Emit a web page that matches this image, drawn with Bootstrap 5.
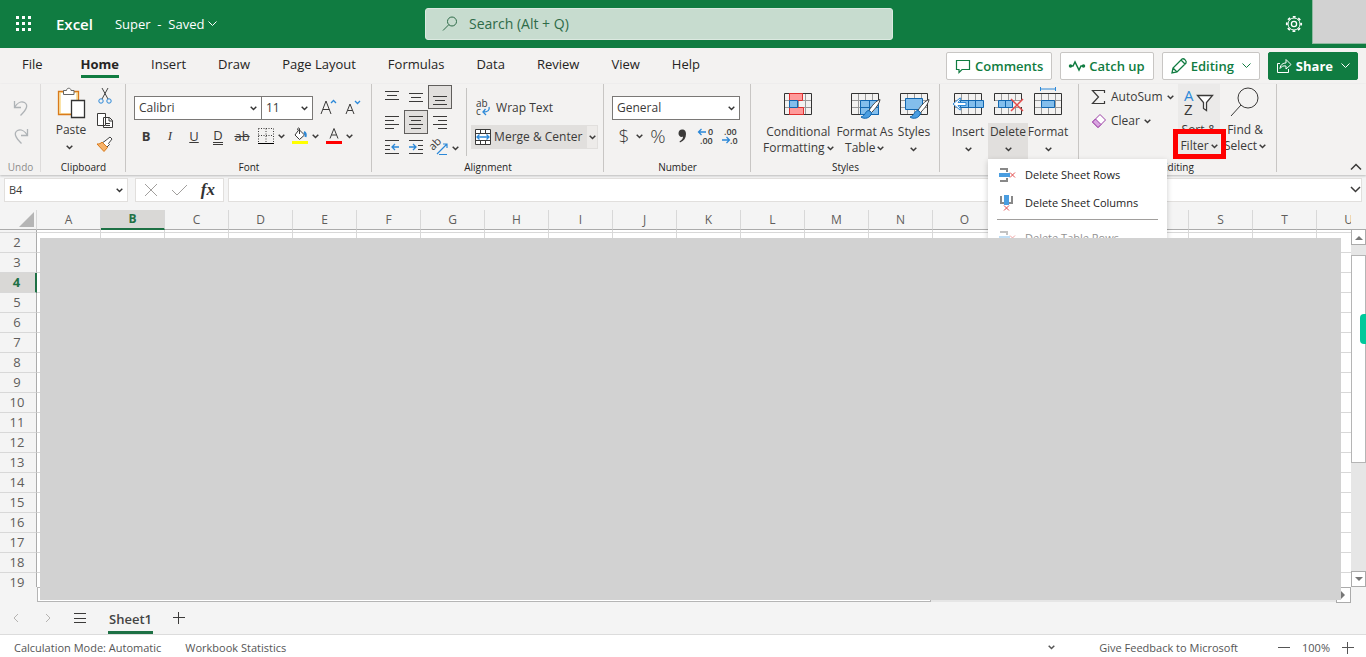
<!DOCTYPE html>
<html lang="en">
<head>
<meta charset="utf-8">
<meta name="viewport" content="width=device-width, initial-scale=1">
<title>Super - Excel</title>
<link href="https://cdn.jsdelivr.net/npm/bootstrap@5.3.0/dist/css/bootstrap.min.css" rel="stylesheet">
<style>
:root{--xl:#107c41;--ink:#3b3a39;--line:#c8c6c4;--blue:#2b88d8}
body{font-family:"Open Sans","Noto Sans",sans-serif;font-size:12px;line-height:16px;color:var(--ink);background:#f4f4f4;height:100vh;min-width:1280px;overflow:hidden}
body>*{flex-shrink:0}
button{font:inherit;color:inherit;background:none;border:0;padding:0}
svg{flex:none;fill:none;stroke:currentColor;display:block;overflow:visible}
svg text{stroke:none;fill:currentColor;font-family:"Open Sans",sans-serif}
.chev{width:7px;height:5px;stroke-width:1.5}
.chev-lg{width:9px;height:6px;stroke-width:1}
/* title bar */
.topbar{height:48px;background:var(--xl);color:#fff;position:relative;padding-left:16px}
.brand-name{font-size:15px;font-weight:600;margin-left:24px}
.doc-name{font-size:13px;margin-left:22px}
.finder{position:absolute;left:425px;top:8px;width:468px;height:32px;background:#c7dccf;border:1px solid #dbe9e0;border-radius:3px;color:#2e6b48;padding-left:16px}
.finder input{background:none;border:0;outline:0;font-size:14px;color:#2e6b48;padding:0 0 0 11px}
.finder input::placeholder{color:#2e6b48;opacity:1}
.account-box{width:54px;height:44px;background:#d2d2d2;border:1px solid #8fb9a0;border-top:0;border-right:0}
/* tabs */
.tabs-row{height:36px;background:#f3f2f1;padding-right:8px}
.tab-link{font-size:13px;line-height:18px;color:#252423;text-decoration:none;padding:7px 16px 0}
.tab-link span{display:block;padding-bottom:2px;border-bottom:3px solid transparent}
.tab-link.on{font-weight:700}
.tab-link.on span{border-color:var(--xl)}
.tab-link:first-child{margin-right:6px}
.tabs-list{padding-left:6px}
.pill{height:28px;border:1px solid var(--line);border-radius:2px;background:#fff;color:var(--xl);font-size:13px;font-weight:600;padding:0 8px}
.pill.solid{background:var(--xl);border-color:var(--xl);color:#fff;font-weight:700;padding:0 7px}
/* ribbon */
.ribbon{height:91px;background:#f3f2f1;display:grid;grid-template-columns:41px 85px 246px 232px 147px 189px 139px 198px 1fr;box-shadow:0 1px 2px #bbb;position:relative;z-index:5}
.grp{position:relative;display:flex;flex-direction:column}
.grp:not(:last-child)::after{content:"";position:absolute;right:0;top:0;height:88px;border-right:1px solid var(--line)}
.grp-body{height:76px;display:flex}
.grp-name{font-size:10px;line-height:15px;text-align:center;color:#252423}
.tall{display:flex;flex-direction:column;align-items:center;line-height:16px;white-space:nowrap}
.tall .lbl{margin-top:4px}
.tall .lbl.near{margin-top:2px}
.tall .chev{margin-top:7px}
.tall .lbl .chev{display:inline-block;margin:0 0 1px 2px}
.tall>svg:first-child{height:36px;width:36px}
.cell-btn{width:40px}
.cell-btn.open{background:linear-gradient(transparent 39px,#e1dfdd 39px)}
.sort-btn{width:42px;background:#ebeae9}
.field{height:24px;border:1px solid #7a7876;background:#fff url("data:image/svg+xml,%3Csvg xmlns='http://www.w3.org/2000/svg' width='7' height='5'%3E%3Cpath d='M.7.7l2.8 2.8L6.300.7' fill='none' stroke='%23333' stroke-width='1.4'/%3E%3C/svg%3E") no-repeat right 4px center;appearance:none;padding:0 4px;font-size:12px;color:var(--ink);border-radius:0}
.w-font{width:128px}
.w-size{width:51px}
.sq{width:24px;height:24px;display:flex;align-items:center;justify-content:center;font-size:13px}
.sq.on{background:#e1dfdd;box-shadow:inset 0 0 0 1px #605e5c}
.sq.money{font-size:19px;font-weight:300}
.dbl{border-bottom:3px double;line-height:14px}
.serif-i{font-family:"Liberation Serif",serif;font-style:italic}
.drop{width:6px;height:24px;display:flex;align-items:center;justify-content:center}
.align-grid{display:grid;grid-template-columns:repeat(3,24px);grid-auto-rows:24px;row-gap:1px;padding-top:1px}
.wrap-btn{height:24px;padding-left:4px}
.merge{height:24px;margin-top:5px;background:#e1dfdd}
.merge button+button{background:#edebe9;border:1px solid #e1dfdd;width:12px;display:flex;align-items:center;justify-content:center}
.sum-col{width:91px;padding:1px 0 0 4px}
.sum-col button{height:24px}
/* delete menu */
.del-menu{position:absolute;left:48px;top:75px;width:179px;background:#fff;box-shadow:0 2px 6px #0003;z-index:6;padding-top:2px;font-size:11px}
.del-menu button{display:flex;align-items:center;width:100%;height:28px;padding-left:11px;gap:10px;color:#252423}
.del-menu hr{margin:2px 9px 4px;border-color:#a19f9d;opacity:1}
.marker{position:absolute;left:-5px;top:45px;width:53px;height:30px;border:5px solid red;z-index:7;pointer-events:none}
/* formula bar */
.fbar{padding:3px 4px 3px;gap:7px;height:31px}
.fbox{height:24px;background:#fff;border:1px solid #e1dfdd}
.fx-tools{width:89px;color:#a19f9d}
.fx-label{font:italic bold 17px "Liberation Serif",serif;color:#333}
.fx-line{margin-left:-3px}
.fx-line input{outline:0}
.name-box{width:124px;border-color:#e1dfdd;font-size:11px}
/* sheet */
.sheet-area{position:relative;margin-top:4px;min-height:0;flex:1 1 0}
.grid-wrap{min-height:0;flex:1 1 0}
.pane{overflow:hidden;min-width:0}
.cells{border-collapse:separate;border-spacing:0;table-layout:fixed;width:1381px;background:#fff}
.cells th,.cells td{padding:0;height:20px;line-height:19px;border-right:1px solid #d8d8d8;border-bottom:1px solid #d8d8d8;font-weight:400}
.cells th{background:#f4f4f4;color:#5f5d5b;text-align:center;font-size:12px}
.cells thead th{border-bottom-color:#ababab;height:20px;line-height:18px}
.cells thead th:first-child{width:37px}
.cells thead svg{margin-left:19px}
.cells tbody th{border-right-color:#ababab;font-size:13px;padding-right:2px}
.cells .short th,.cells .short td{height:3px;line-height:0;font-size:0}
.cells .sel{background:#d9d8d6;color:#1e7145;font-weight:700}
.cells thead .sel{border-bottom:2px solid #1e7145}
.cells tbody .sel{border-right:2px solid #1e7145}
.vbar{width:15px;margin-top:19px;background:#e6e6e6}
.arrow{width:15px;height:16px;background:#fff;border:1px solid #ababab;display:flex;align-items:center;justify-content:center}
.arrow svg{fill:#777;stroke:none}
.thumb{background:#fff;border:1px solid #b5b5b5}
.vbar .thumb{height:58%;margin-top:10px}
.hbar{height:15px;flex-shrink:0;margin-left:37px;margin-right:15px;background:#e6e6e6}
.hbar .thumb{width:68%}
.cover{position:absolute;left:40px;right:25px;top:28px;bottom:2px;background:#d2d2d2;z-index:10}
.side-tab{position:absolute;right:0;top:104px;width:6px;height:30px;background:#00c99b;border-radius:4px 0 0 4px;z-index:11}
.sheets{height:33px;border-bottom:1px solid #dcdcdc;padding-left:12px}
.sheet-tab{font-size:13px;font-weight:600;height:28px;padding:0 1px;margin:0 20px;border-bottom:3px solid #1e7145;color:#444}
.pale{color:#b5b3b1}
.status{height:22px;background:#fff;color:#555;font-size:11px;padding:3px 12px 0 14px}
.status a{margin:0 40px 0 44px}
</style>
</head>
<body class="d-flex flex-column">
<svg width="0" height="0" class="position-absolute">
<symbol id="cv" viewBox="0 0 7 5"><path d="M.7.7l2.800 2.800L6.300.7"/></symbol>
<symbol id="cvl" viewBox="0 0 9 6"><path d="M.5.5l4 4 4-4"/></symbol>
<symbol id="tbl" viewBox="0 0 30 24"><path fill="#fff" stroke="#999" d="M1.500 8.500h27M1.500 15.500h27M8.500 1.500v21M15.500 1.500v21M22.500 1.500v21"/><path stroke="#333" d="M1.500 1.500h27v21h-27z"/></symbol>
<symbol id="brush" viewBox="0 0 22 22"><path fill="#fff" stroke="#444" d="M20.500 1.500c-4 1.500-8 6-11 11l2.500 2c4-4 8-9 8.500-13z"/><path fill="#4a9de0" stroke="#1267b0" d="M9.500 12.500c-4 0-3 5-8 6.500 3 2.500 10 1.500 10.500-4.500z"/></symbol>
</svg>

<header class="topbar d-flex align-items-center">
  <button aria-label="App launcher"><svg width="16" height="16" style="fill:#fff;stroke:none"><path d="M0 0h3v3H0zM6 0h3v3H6zM12 0h3v3h-3zM0 6h3v3H0zM6 6h3v3H6zM12 6h3v3h-3zM0 12h3v3H0zM6 12h3v3H6zM12 12h3v3h-3z"/></svg></button>
  <span class="brand-name">Excel</span>
  <button class="doc-name d-flex align-items-center"><span>Super&nbsp; -&nbsp; Saved</span><svg class="chev-lg ms-1"><use href="#cvl"/></svg></button>
  <div class="finder d-flex align-items-center">
    <svg width="16" height="16"><circle cx="10" cy="5.500" r="4.500"/><path d="M6.800 8.700L1 14.500"/></svg>
    <input class="flex-grow-1" type="search" placeholder="Search (Alt + Q)" aria-label="Search">
  </div>
  <button class="ms-auto me-2" aria-label="Settings"><svg width="20" height="20" viewBox="0 0 20 20"><circle cx="10" cy="10" r="2.600" stroke-width="1.300"/><circle cx="10" cy="10" r="6"/><circle cx="10" cy="10" r="7.200" stroke-width="1.800" stroke-dasharray="2.800 2.855" stroke-dashoffset="1.400"/></svg></button>
  <div class="account-box align-self-start"></div>
</header>

<div class="tabs-row d-flex justify-content-between">
  <nav class="tabs-list d-flex align-items-start" aria-label="Ribbon tabs">
    <a href="#" class="tab-link"><span>File</span></a><a href="#" class="tab-link on"><span>Home</span></a><a href="#" class="tab-link"><span>Insert</span></a><a href="#" class="tab-link"><span>Draw</span></a><a href="#" class="tab-link"><span>Page Layout</span></a><a href="#" class="tab-link"><span>Formulas</span></a><a href="#" class="tab-link"><span>Data</span></a><a href="#" class="tab-link"><span>Review</span></a><a href="#" class="tab-link"><span>View</span></a><a href="#" class="tab-link"><span>Help</span></a>
  </nav>
  <div class="d-flex gap-2 pt-1">
    <button class="pill d-flex align-items-center gap-1"><svg width="16" height="16" stroke-width="1.200"><path d="M1.500 2.500h13v9H7l-3 3v-3H1.500z"/></svg>Comments</button>
    <button class="pill d-flex align-items-center gap-1"><svg width="16" height="16" stroke-width="1.500"><path d="M1 8h3l2-4 4 8 2-4h3"/><circle cx="1.500" cy="8" r="1"/><circle cx="14.500" cy="8" r="1"/></svg>Catch up</button>
    <button class="pill d-flex align-items-center gap-1"><svg width="16" height="16" stroke-width="1.300"><path d="M1 15l1-5 9-9c2-1 5 2 4 4l-9 9zM10 2l4 4M2 10l4 4"/></svg>Editing<svg class="chev-lg ms-1"><use href="#cvl"/></svg></button>
    <button class="pill solid d-flex align-items-center gap-1"><svg width="16" height="16"><path d="M4 5.500H1.500v9h11V11M4 10.500c.5-4 3-5.500 6-5.500V1.500l5 5-5 4.500V8c-3-.5-4.500.500-6 2.500z"/></svg>Share<svg class="chev-lg ms-1"><use href="#cvl"/></svg></button>
  </div>
</div>

<section class="ribbon">
  <div class="grp text-secondary opacity-50">
    <div class="grp-body flex-column align-items-center pt-2">
      <button class="sq mt-1" aria-label="Undo"><svg width="16" height="18" stroke-width="1.300"><path d="M1.500 2v6.500H8M1.500 8.500C4 4 8 2 11.500 3.500c4 2.500 2.500 6.500-4 13"/></svg></button>
      <button class="sq mt-1" aria-label="Redo"><svg width="16" height="18" stroke-width="1.300"><path d="M14.500 2v6.500H8M14.500 8.500C12 4 8 2 4.500 3.500c-4 2.500-2.500 6.500 4 13"/></svg></button>
    </div><div class="grp-name">Undo</div>
  </div>
  <div class="grp">
    <div class="grp-body ps-2">
      <button class="tall ps-1"><svg viewBox="0 0 36 36"><path fill="#fbe3a8" stroke="#d97a1a" stroke-width="1.300" d="M5.500 7.500h20v23h-20z"/><path fill="#fff" stroke="none" d="M8 9h15v20H8z"/><path fill="#fff" stroke="#666" d="M10.500 10.500v-4h3c0-3 4.500-3 4.500 0h3v4z"/><path fill="#fff" stroke="#333" stroke-width="1.300" d="M18.500 16.500h13v17h-13z"/></svg><span class="lbl near">Paste</span><svg class="chev me-1"><use href="#cv"/></svg></button>
      <div class="ms-1 d-flex flex-column">
        <button class="sq" aria-label="Cut"><svg width="14" height="18"><path stroke="#444" d="M4 1l6 11M10 1L4 12"/><circle cx="3" cy="14" r="2.200" stroke="#2b88d8"/><circle cx="11" cy="14" r="2.200" stroke="#2b88d8"/></svg></button>
        <button class="sq" aria-label="Copy"><svg width="18" height="18"><path fill="#fff" d="M1.500 2.500h8v12h-8zM7.500 6.500h6l3 3v7h-9zM13 6.500V10h3.500M10 12.500h4M10 14.500h4"/></svg></button>
        <button class="sq" aria-label="Format painter"><svg width="18" height="18"><path fill="#fff" stroke="#444" d="M9 6l5-4 2 2-3.500 4.500 1 1L10 13 6 8z"/><path fill="#f7b36a" stroke="#d97a1a" d="M6 7l5.500 5.500L8 16.500 1 9c2 0 4-.5 5-2z"/></svg></button>
      </div>
    </div><div class="grp-name">Clipboard</div>
  </div>
  <div class="grp">
    <div class="grp-body flex-column ps-2 pt-1">
      <div class="d-flex align-items-center mt-2">
        <select class="field w-font" aria-label="Font"><option>Calibri</option></select>
        <select class="field w-size border-start-0" aria-label="Font size"><option>11</option></select>
        <button class="sq ms-1" aria-label="Grow font"><svg width="18" height="20"><path d="M1 16L6 3l5 13M3 11.500h6.500"/><path stroke="#2b88d8" stroke-width="1.300" d="M11 5l2.500-2.500L16 5"/></svg></button>
        <button class="sq" aria-label="Shrink font"><svg width="18" height="20"><path d="M2 16L6 6l4 10M4 12.500h4.500"/><path stroke="#2b88d8" stroke-width="1.300" d="M11 3l2.500 2.500L16 3"/></svg></button>
      </div>
      <div class="d-flex align-items-center mt-1">
        <button class="sq fw-bold">B</button><button class="sq serif-i">I</button><button class="sq"><u>U</u></button><button class="sq"><span class="dbl">D</span></button><button class="sq text-decoration-line-through">ab</button>
        <button class="sq" aria-label="Borders"><svg width="16" height="16"><path stroke-dasharray="1 1.500" d="M.5.5h15v14M.5.5v14M8 .5v14M.5 7.500h15"/><path stroke="#000" stroke-width="1" d="M0 15.500h16"/></svg></button><span class="drop"><svg class="chev"><use href="#cv"/></svg></span>
        <button class="sq ms-1" aria-label="Fill color"><svg width="16" height="16"><path fill="#fff" d="M7 1.500L12.500 7 7.500 11.500 3 7zM7.500 6V.5c-1-1.500-2 0-2 1.500"/><path stroke="#2b88d8" stroke-width="2" d="M12 4c2 1 2 3 1.500 5"/><path fill="#ff0" stroke="none" d="M0 13h16v3H0z"/></svg></button><span class="drop"><svg class="chev"><use href="#cv"/></svg></span>
        <button class="sq ms-1" aria-label="Font color"><svg width="16" height="16"><path d="M4 10.500L8 .5l4 10M5.500 7h5"/><path fill="red" stroke="none" d="M0 13h16v3H0z"/></svg></button><span class="drop"><svg class="chev"><use href="#cv"/></svg></span>
      </div>
    </div><div class="grp-name">Font</div>
  </div>
  <div class="grp">
    <div class="grp-body ps-2">
      <div class="align-grid">
        <button class="sq" aria-label="Top align"><svg width="16" height="16"><path d="M1 2.500h14M3 6.500h10M1 10.500h14"/></svg></button>
        <button class="sq" aria-label="Middle align"><svg width="16" height="16"><path d="M1 4.500h14M3 8.500h10M1 12.500h14"/></svg></button>
        <button class="sq on" aria-label="Bottom align"><svg width="16" height="16"><path d="M1 7.500h14M3 11.500h10M1 15.500h14"/></svg></button>
        <button class="sq" aria-label="Align left"><svg width="16" height="16"><path d="M1 2.500h14M1 6.500h9M1 10.500h14M1 14.500h9"/></svg></button>
        <button class="sq on" aria-label="Center"><svg width="16" height="16"><path d="M1 2.500h14M3 6.500h10M1 10.500h14M3 14.500h10"/></svg></button>
        <button class="sq" aria-label="Align right"><svg width="16" height="16"><path d="M1 2.500h14M6 6.500h9M1 10.500h14M6 14.500h9"/></svg></button>
        <button class="sq" aria-label="Decrease indent"><svg width="16" height="16"><path d="M1 1.500h14M1 6.500h5M1 10.500h5M1 14.500h14"/><path stroke="#2b88d8" stroke-width="1.300" d="M15 8H8.500M11 5L8 8l3 3"/></svg></button>
        <button class="sq" aria-label="Increase indent"><svg width="16" height="16"><path d="M1 1.500h14M10 6.500h5M10 10.500h5M1 14.500h14"/><path stroke="#2b88d8" stroke-width="1.300" d="M1 8h6.500M5 5l3 3-3 3"/></svg></button>
        <button class="sq" aria-label="Orientation"><svg width="18" height="18"><text font-size="11" transform="translate(4 11) rotate(-45)" x="-3" y="0">ab</text><path stroke="#2b88d8" stroke-width="1.200" d="M6 16L16 6M12 6h4v4M8 16.500h8"/></svg></button>
      </div>
      <div class="d-flex align-items-end"><span class="drop"><svg class="chev"><use href="#cv"/></svg></span></div>
      <div class="vr mt-1 mb-1 ms-2 me-1 opacity-25"></div>
      <div class="d-flex flex-column pt-2 mt-1">
        <button class="wrap-btn d-flex align-items-center"><svg width="18" height="18"><text font-size="10" x="1" y="8">ab</text><text font-size="10" x="1" y="16">c</text><path stroke="#2b88d8" stroke-width="1.300" d="M14 8c1 3-1 5-6 5M10.500 10L8 13l3 3"/></svg>&nbsp;Wrap Text</button>
        <div class="merge d-flex"><button class="d-flex align-items-center ps-1 pe-1"><svg width="16" height="16"><path fill="#fff" d="M.5.5h15v15H.5zM5.500.5v4M10.500.5v4M5.500 11.500v4M10.500 11.500v4M.5 4.500h15M.5 11.500h15"/><path stroke="#2b88d8" stroke-width="1.300" d="M2 8h12M4.500 5.500L2 8l2.500 2.500M11.500 5.500L14 8l-2.500 2.500"/></svg>&nbsp;Merge &amp; Center</button><button aria-label="Merge options"><svg class="chev"><use href="#cv"/></svg></button></div>
      </div>
    </div><div class="grp-name">Alignment</div>
  </div>
  <div class="grp">
    <div class="grp-body flex-column ps-2 pt-1">
      <select class="field w-font mt-2" aria-label="Number format"><option>General</option></select>
      <div class="d-flex mt-1">
        <button class="sq money">$</button><span class="drop"><svg class="chev"><use href="#cv"/></svg></span><button class="sq money ms-1">%</button><button class="sq" aria-label="Comma style"><svg width="12" height="16"><path fill="currentColor" stroke="none" d="M6 1.500c3 0 4 2 4 4.500 0 4-2 7-6 8.500l-.5-1C6 12 7 10.500 7 8.800 4 9.500 2.500 7.500 2.500 5.200c0-2 1.500-3.700 3.500-3.700z"/></svg></button>
        <button class="sq" aria-label="Increase decimal"><svg width="18" height="18"><text font-size="9" font-weight="600" x="11" y="8">0</text><text font-size="9" font-weight="600" x="3" y="17">.00</text><path stroke="#2b88d8" stroke-width="1.300" d="M9 5H2M4.500 2L1.500 5l3 3"/></svg></button>
        <button class="sq" aria-label="Decrease decimal"><svg width="18" height="18"><text font-size="9" font-weight="600" x="3" y="8">.00</text><text font-size="9" font-weight="600" x="9" y="17">.0</text><path stroke="#2b88d8" stroke-width="1.300" d="M1 13h7M5.500 10l3 3-3 3"/></svg></button>
      </div>
    </div><div class="grp-name">Number</div>
  </div>
  <div class="grp">
    <div class="grp-body ps-2 pe-1 justify-content-between">
      <button class="tall ms-1"><svg viewBox="-3 -8 36 36"><use href="#tbl" width="30" height="24"/><path fill="#ff9a9a" stroke="#e03030" d="M6.500 1.500h13v7h-13zM6.500 15.500h14v7h-14z"/><path fill="#83beec" stroke="#1267b0" d="M6.500 8.500h8v7h-8z"/></svg><span class="lbl">Conditional<br>Formatting<svg class="chev"><use href="#cv"/></svg></span></button>
      <button class="tall"><svg viewBox="-3 -8 36 36"><use href="#tbl" width="30" height="24"/><path fill="#83beec" stroke="#1267b0" d="M10.500 8.500h18v14h-18zM10.500 15.500h18M19.500 8.500v14"/><use href="#brush" x="9" y="6" width="23" height="22"/></svg><span class="lbl">Format As<br>Table<svg class="chev"><use href="#cv"/></svg></span></button>
      <button class="tall me-1"><svg viewBox="-3 -8 36 36"><use href="#tbl" width="30" height="24"/><path fill="#83beec" stroke="#1267b0" d="M6.500 6.500h17v11h-17z"/><use href="#brush" x="9" y="6" width="23" height="22"/></svg><span class="lbl">Styles</span><svg class="chev"><use href="#cv"/></svg></button>
    </div><div class="grp-name">Styles</div>
  </div>
  <div class="grp">
    <div class="grp-body ps-2">
      <button class="tall cell-btn"><svg viewBox="-3 -8 36 36"><use href="#tbl" width="30" height="24"/><path fill="#83beec" stroke="#1267b0" d="M7.500 8.500h23v7h-23zM15.500 8.500v7M22.500 8.500v7"/><path fill="#fff" stroke="#2b88d8" d="M13 10.500H5l3-4-1-.5-7 6 7 6 1-.500-3-4h8z"/></svg><span class="lbl">Insert</span><svg class="chev"><use href="#cv"/></svg></button>
      <button class="tall cell-btn open" aria-expanded="true"><svg viewBox="-3 -8 36 36"><use href="#tbl" width="30" height="24"/><path fill="#f3f2f1" stroke="none" d="M0 9h30v6H0z"/><path fill="#83beec" stroke="#1267b0" d="M5.500 8.500h14v7h-14zM12.500 8.500v7"/><path stroke="#e34b4b" stroke-width="1.500" d="M18 7l12 12M30 7L18 19"/></svg><span class="lbl">Delete</span><svg class="chev"><use href="#cv"/></svg></button>
      <button class="tall cell-btn"><svg viewBox="-3 -8 36 36"><use href="#tbl" width="30" height="24"/><path fill="#83beec" stroke="#1267b0" d="M8.500 8.500h13v7h-13z"/><path stroke="#2b88d8" d="M7.500-5v4M22.500-5v4M7.500-3h15"/></svg><span class="lbl">Format</span><svg class="chev"><use href="#cv"/></svg></button>
    </div>
    <div class="del-menu" role="menu">
      <button role="menuitem"><svg width="16" height="16"><path stroke="#888" stroke-width="2" d="M1 2h7v3M1 14h7v-3"/><path fill="#4a9de0" stroke="none" d="M0 6h11v4H0z"/><path stroke="#e34b4b" d="M11 5.500l5 5M16 5.500l-5 5"/></svg>Delete Sheet Rows</button>
      <button role="menuitem"><svg width="16" height="16"><path stroke="#888" stroke-width="2" d="M2 1v7h3M13 1v7h-3"/><path fill="#4a9de0" stroke="none" d="M5 0h5v10H5z"/><path stroke="#e34b4b" d="M5 10.500l5 5M10 10.500l-5 5"/></svg>Delete Sheet Columns</button>
      <hr>
      <button role="menuitem" disabled class="opacity-50"><svg width="16" height="16"><path stroke="#888" stroke-width="2" d="M1 2h7v3M1 14h7v-3"/><path fill="#83beec" stroke="none" d="M0 6h11v4H0z"/><path stroke="#e34b4b" d="M11 5.500l5 5M16 5.500l-5 5"/></svg>Delete Table Rows</button>
    </div>
  </div>
  <div class="grp">
    <div class="grp-body ps-2">
      <div class="sum-col d-flex flex-column">
        <button class="d-flex align-items-center gap-1"><svg width="16" height="16" stroke-width="1.200"><path d="M13.500 4V1.500H1.500l6 6.500-6 6.500h12V12"/></svg>AutoSum<svg class="chev"><use href="#cv"/></svg></button>
        <button class="d-flex align-items-center gap-1"><svg width="16" height="16"><path fill="#fff" stroke="#9b3fa5" d="M9 1.500L14.500 7 7 14.500 1.500 9z"/><path fill="#d9a5e0" stroke="#9b3fa5" d="M4.500 6L10 11.500l-3 3L1.500 9z"/></svg>Clear<svg class="chev"><use href="#cv"/></svg></button>
      </div>
      <button class="tall sort-btn position-relative"><svg viewBox="0 0 36 36"><text font-size="15" x="3" y="17" style="fill:#2b88d8">A</text><text font-size="15" x="3" y="31">Z</text><path fill="#fff" stroke-width="1.300" d="M16.500 11.500h15l-6 7v8l-3-2v-6z"/></svg><span class="lbl near">Sort &amp;<br>Filter<svg class="chev"><use href="#cv"/></svg></span><span class="marker"></span></button>
      <button class="tall ms-1"><svg viewBox="0 0 36 36"><circle cx="21" cy="14" r="10"/><path d="M14 21L4 32"/></svg><span class="lbl near">Find &amp;<br>Select<svg class="chev"><use href="#cv"/></svg></span></button>
    </div><div class="grp-name">Editing</div>
  </div>
  <div class="grp"><button class="ms-auto mt-auto mb-1 me-1" aria-label="Collapse ribbon"><svg width="12" height="8" stroke-width="1.500"><path d="M1 6.500l5-5 5 5"/></svg></button></div>
</section>

<div class="fbar d-flex">
  <select class="field name-box" aria-label="Name box"><option>B4</option></select>
  <div class="fbox fx-tools d-flex align-items-center justify-content-between px-2">
    <button aria-label="Cancel"><svg width="14" height="14"><path d="M1 1l12 12M13 1L1 13"/></svg></button>
    <button aria-label="Enter"><svg width="17" height="14"><path d="M1 7l5 5L16 2"/></svg></button>
    <button class="fx-label">fx</button>
  </div>
  <div class="fbox fx-line flex-grow-1 d-flex align-items-center"><input class="border-0 flex-grow-1 h-100 p-0" aria-label="Formula bar"><svg width="11" height="8" stroke="#000" stroke-width="1.500"><path d="M1 1l4.500 4.500L10 1"/></svg></div>
</div>

<main class="sheet-area d-flex flex-column">
  <div class="grid-wrap d-flex">
    <div class="pane flex-grow-1"><table class="cells"><thead><tr id="cols"></tr></thead><tbody id="rows"></tbody></table></div>
    <div class="vbar d-flex flex-column"><div class="arrow"><svg width="8" height="5"><path d="M0 5l4-4 4 4z"/></svg></div><div class="thumb"></div><div class="arrow mt-auto"><svg width="8" height="5"><path d="M0 0l4 4 4-4z"/></svg></div></div>
  </div>
  <div class="hbar d-flex"><div class="thumb"></div><div class="arrow ms-auto"><svg width="5" height="8"><path d="M0 0l4 4-4 4z"/></svg></div></div>
  <div class="cover"></div>
  <div class="side-tab"></div>
</main>

<div class="sheets d-flex align-items-center">
  <button class="pale" aria-label="Previous sheet"><svg width="8" height="10"><path d="M6 1L2 5l4 4"/></svg></button>
  <button class="pale ms-4" aria-label="Next sheet"><svg width="8" height="10"><path d="M2 1l4 4-4 4"/></svg></button>
  <button class="ms-4" aria-label="All sheets"><svg width="12" height="10"><path d="M-2 .5h12M-2 5.500h12M-2 9.500h12"/></svg></button>
  <button class="sheet-tab align-self-end">Sheet1</button>
  <button aria-label="New sheet"><svg width="12" height="12"><path d="M0 5.500h12M5.500 0v12"/></svg></button>
</div>
<footer class="status d-flex align-items-center">
  <span>Calculation Mode: Automatic</span><span class="ms-4">Workbook Statistics</span>
  <svg class="chev ms-auto"><use href="#cv"/></svg>
  <a href="#" class="text-reset text-decoration-none">Give Feedback to Microsoft</a>
  <button aria-label="Zoom out"><svg width="12" height="12"><path d="M0 5.500h12"/></svg></button>
  <span class="mx-2 px-1">100%</span>
  <button aria-label="Zoom in"><svg width="12" height="12"><path d="M0 5.500h12M5.500 0v12"/></svg></button>
</footer>

<script src="https://cdn.jsdelivr.net/npm/bootstrap@5.3.0/dist/js/bootstrap.bundle.min.js"></script>
<script>
const letters = [...'ABCDEFGHIJKLMNOPQRSTU'];
document.getElementById('cols').innerHTML =
  '<th scope="col"><svg width="15" height="15"><path fill="#b5b5b5" stroke="none" d="M15 0v15H0z"/></svg></th>' +
  letters.map(c => `<th scope="col"${c === 'B' ? ' class="sel"' : ''}>${c}</th>`).join('');
let body = '';
for (let r = 1; r < 20; r++) {
  body += `<tr${r === 1 ? ' class="short"' : ''}><th scope="row"${r === 4 ? ' class="sel"' : ''}>${r === 1 ? '' : r}</th>${'<td></td>'.repeat(letters.length)}</tr>`;
}
document.getElementById('rows').innerHTML = body;
</script>
</body>
</html>
